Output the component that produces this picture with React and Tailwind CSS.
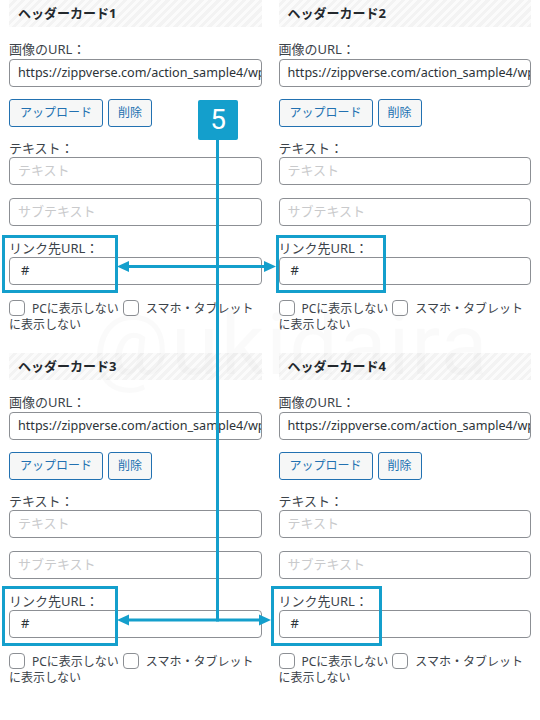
import React from 'react';

const font = "font-['Noto_Sans','Noto_Sans_CJK_JP',sans-serif]";

function Field({ value, placeholder, className = '' }) {
  return (
    <div
      className={`h-[28px] border border-[#8c8f94] rounded-[4px] bg-white flex items-center px-[8px] overflow-hidden whitespace-nowrap text-[13px] ${className}`}
    >
      {value ? (
        <span className="text-[#2c3338]">{value}</span>
      ) : (
        <span className="text-[#c9cacc]">{placeholder}</span>
      )}
    </div>
  );
}

function Check({ children }) {
  return (
    <>
      <span className="inline-block w-[16px] h-[16px] align-[-3px] border border-[#8c8f94] rounded-[4px] bg-white mr-[7px]" />
      {children}
    </>
  );
}

function Card({ n }) {
  return (
    <div className="h-[353px] text-[#3c434a]">
      <div className="h-[27px] flex items-center pl-[9px] bg-[repeating-linear-gradient(-45deg,#f3f3f3_0px,#f3f3f3_3px,#fbfbfb_3px,#fbfbfb_6px)]">
        <span className="text-[13px] font-bold text-[#23282d]">ヘッダーカード{n}</span>
      </div>
      <div className="mt-[13px] h-[18px] leading-[18px] text-[13px]">画像のURL：</div>
      <Field
        className="mt-[1px] !text-[12.6px]"
        value="https://zippverse.com/action_sample4/wp-content/uploads/header.jpg"
      />
      <div className="mt-[12px] flex gap-[5px]">
        <button className="h-[28px] px-[10px] text-[12px] text-[#2271b1] border border-[#2271b1] rounded-[3px] bg-[#f6f7f7]">
          アップロード
        </button>
        <button className="h-[28px] px-[9px] text-[12px] text-[#2271b1] border border-[#2271b1] rounded-[3px] bg-[#f6f7f7]">
          削除
        </button>
      </div>
      <div className="mt-[12px] h-[18px] leading-[18px] text-[13px]">テキスト：</div>
      <Field placeholder="テキスト" />
      <Field className="mt-[13px]" placeholder="サブテキスト" />
      <div className="mt-[13px] h-[18px] leading-[18px] text-[13px]">リンク先URL：</div>
      <Field value={<span className="pl-[3px]">#</span>} />
      <div className="mt-[15px] text-[12px] leading-[16px]">
        <Check>PCに表示しない</Check>
        <span className="ml-[4px]" />
        <Check>スマホ・タブレットに表示しない</Check>
      </div>
    </div>
  );
}

export default function App() {
  const blue = '#149fcc';
  return (
    <div className={`relative w-[540px] h-[720px] overflow-hidden bg-white ${font}`}>
      <div className="grid grid-cols-2 gap-x-[17px] px-[9px]">
        <Card n={1} />
        <Card n={2} />
        <Card n={3} />
        <Card n={4} />
      </div>

      {/* watermark */}
      <div className="absolute left-[92px] top-[302px] pointer-events-none font-['Roboto',sans-serif] text-[86px] leading-none tracking-[2px] text-black/[0.018]">
        @ukidaira
      </div>

      {/* annotation */}
      <svg className="absolute left-0 top-0 pointer-events-none" width="540" height="720">
        <rect x="3.5" y="236.5" width="113" height="55" fill="none" stroke={blue} strokeWidth="3" />
        <rect x="277.5" y="236.5" width="107" height="55" fill="none" stroke={blue} strokeWidth="3" />
        <rect x="3.5" y="587.5" width="113" height="57" fill="none" stroke={blue} strokeWidth="3" />
        <rect x="272.5" y="587.5" width="108" height="57" fill="none" stroke={blue} strokeWidth="3" />
        <line x1="217.5" y1="138" x2="217.5" y2="621.5" stroke={blue} strokeWidth="3" />
        <line x1="126" y1="266.5" x2="266" y2="266.5" stroke={blue} strokeWidth="3" />
        <polygon points="117,266.5 129,261 129,272" fill={blue} />
        <polygon points="276,266.5 264,261 264,272" fill={blue} />
        <line x1="126" y1="620" x2="262" y2="620" stroke={blue} strokeWidth="3" />
        <polygon points="117,620 129,614.5 129,625.5" fill={blue} />
        <polygon points="271,620 259,614.5 259,625.5" fill={blue} />
      </svg>
      <div
        className="absolute left-[198px] top-[100px] w-[40px] h-[40px] rounded-[2px] bg-[#149fcc] flex items-center justify-center text-white text-[28px] font-['Roboto',sans-serif]"
      >
        5
      </div>
    </div>
  );
}
